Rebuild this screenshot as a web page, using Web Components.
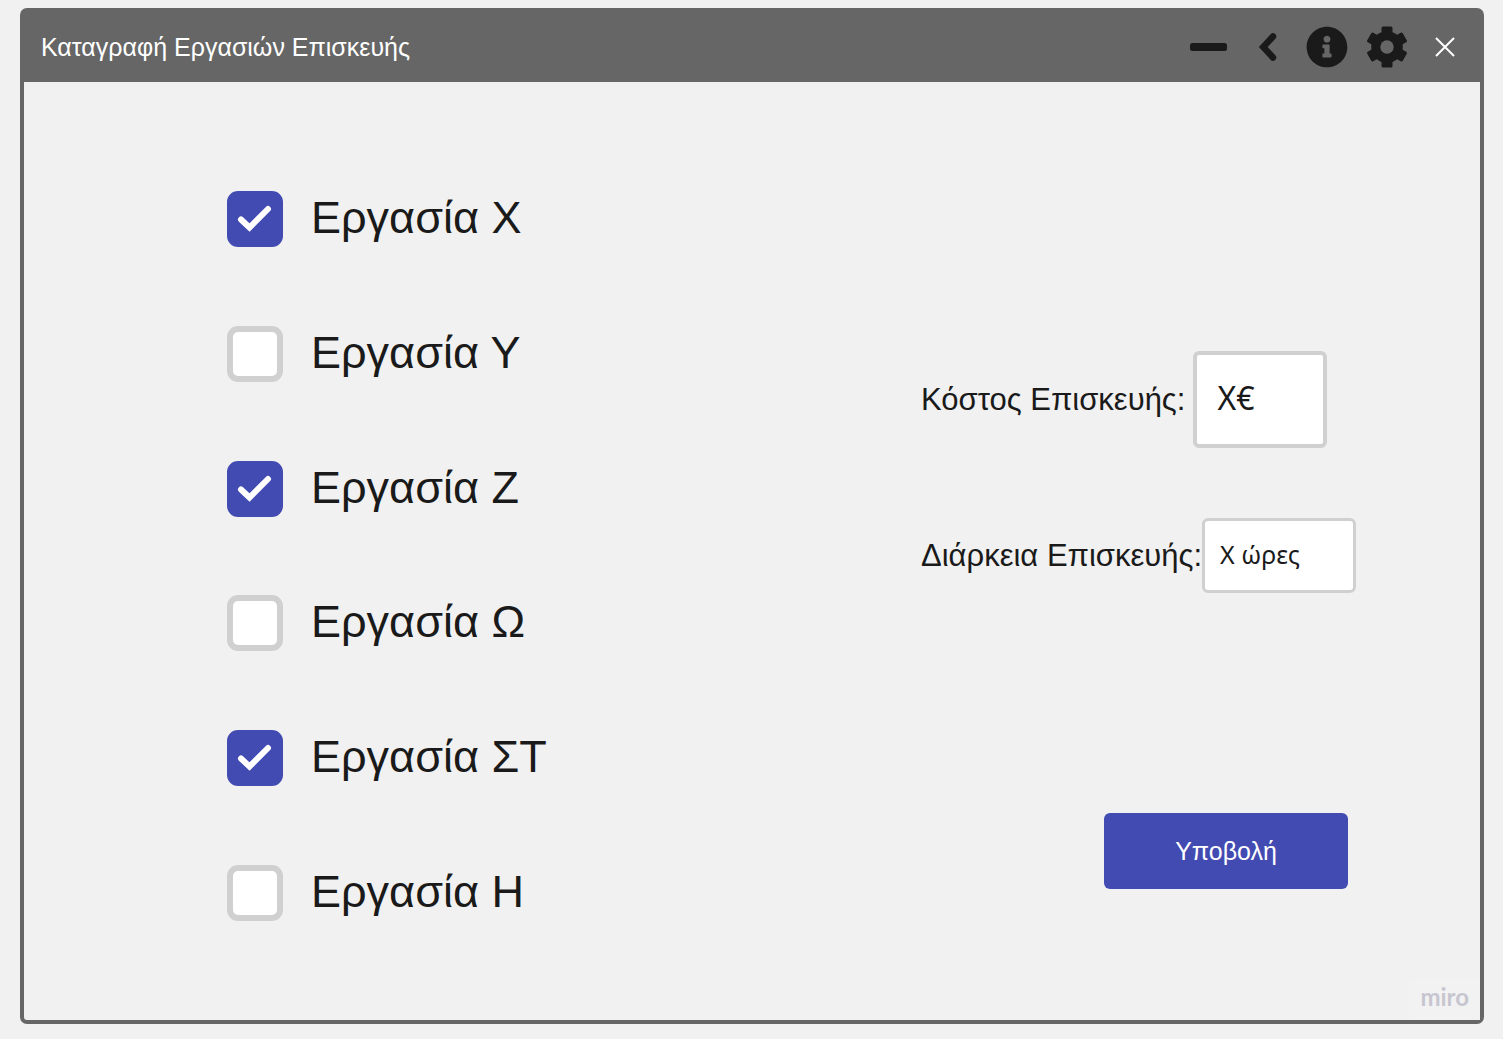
<!DOCTYPE html>
<html lang="el">
<head>
<meta charset="utf-8">
<title>Καταγραφή Εργασιών Επισκευής</title>
<style>
  * { box-sizing: border-box; }
  html { background: #f1f1f1; }
  body { margin: 0; min-height: 100vh; padding: 8px 19px 15px 20px; display: flex; font-family: "Liberation Sans", Arial, sans-serif; color: #1a1a1a; }
</style>
</head>
<body>
<app-window heading="Καταγραφή Εργασιών Επισκευής">
  <repair-form></repair-form>
</app-window>

<template id="t-window">
  <style>
    * { box-sizing: border-box; }
    :host { display: flex; flex-direction: column; flex: 1; position: relative; border: 4px solid #666; border-radius: 7px; background: #f1f1f1; }
    header { display: flex; align-items: center; justify-content: space-between; height: 70px; padding: 0 16px 0 17px; background: #666; }
    h1 { margin: 0; font-size: 25px; font-weight: 400; line-height: 32px; color: #fff; }
    nav { display: flex; align-items: center; gap: 18px; }
    button { display: flex; align-items: center; justify-content: center; width: 42px; height: 42px; padding: 0; border: 0; background: none; color: #1a1a1a; }
    button.close { width: 38px; color: #fff; }
    svg { display: block; }
    main { flex: 1; display: flex; }
    .mark { position: absolute; right: 0; bottom: 0; padding: 8px 11px 13px; background: #f2f2f2; font: 700 24px/20px Lato, sans-serif; color: #c7c6d0; }
  </style>
  <header>
    <h1></h1>
    <nav>
      <button aria-label="Ελαχιστοποίηση"><svg width="42" height="42" viewBox="0 0 42 42"><rect x="4" y="17" width="37" height="8" rx="2.5" fill="currentColor"/></svg></button>
      <button aria-label="Πίσω"><svg width="42" height="42" viewBox="0 0 42 42"><path d="M27 10.500 17.300 21l9.700 10.500" fill="none" stroke="currentColor" stroke-width="6.500" stroke-linecap="round" stroke-linejoin="miter"/></svg></button>
      <button aria-label="Πληροφορίες"><svg width="42" height="42" viewBox="0 0 512 512"><path fill="currentColor" d="M256 8C119 8 8 119 8 256s111 248 248 248 248-111 248-248S393 8 256 8zm0 110c23.200 0 42 18.800 42 42s-18.800 42-42 42-42-18.800-42-42 18.800-42 42-42zm56 254c0 6.600-5.400 12-12 12h-88c-6.600 0-12-5.400-12-12v-24c0-6.600 5.400-12 12-12h12v-64h-12c-6.600 0-12-5.400-12-12v-24c0-6.600 5.400-12 12-12h64c6.600 0 12 5.400 12 12v100h12c6.600 0 12 5.400 12 12v24z"/></svg></button>
      <button aria-label="Ρυθμίσεις"><svg width="42" height="42" viewBox="-21 -21 42 42"><defs><mask id="hole"><rect x="-21" y="-21" width="42" height="42" fill="#fff"/><circle r="6.700" fill="#000"/></mask></defs><g mask="url(#hole)" fill="currentColor"><circle r="15.800"/><rect x="-5.500" y="-20.500" width="11" height="41" rx="1.500"/><rect x="-5.500" y="-20.500" width="11" height="41" rx="1.500" transform="rotate(60)"/><rect x="-5.500" y="-20.500" width="11" height="41" rx="1.500" transform="rotate(120)"/></g></svg></button>
      <button class="close" aria-label="Κλείσιμο"><svg width="38" height="42" viewBox="0 0 38 42"><path d="M10 12l18 18M28 12L10 30" stroke="currentColor" stroke-width="2" fill="none"/></svg></button>
    </nav>
  </header>
  <main><slot></slot></main>
  <div class="mark">miro</div>
</template>

<template id="t-form">
  <style>
    * { box-sizing: border-box; }
    :host { display: flex; flex: 1; }
    form { flex: 1; display: grid; grid-template-columns: 1fr 435px; padding: 109px 124px 99px 203px; }
    .tasks { display: flex; flex-direction: column; justify-content: space-between; gap: 24px; }
    .details { display: flex; flex-direction: column; align-items: flex-start; padding: 160px 0 32px; }
    .details field-box + field-box { margin-top: 70px; }
    .submit { align-self: flex-end; width: 244px; height: 76px; margin: auto 8px 0 0; border: 0; border-radius: 6px; background: #424bb2; color: #fff; font: 25px/32px "Liberation Sans", Arial, sans-serif; }
  </style>
  <form>
    <div class="tasks">
      <task-check checked>Εργασία Χ</task-check>
      <task-check>Εργασία Υ</task-check>
      <task-check checked>Εργασία Ζ</task-check>
      <task-check>Εργασία Ω</task-check>
      <task-check checked>Εργασία ΣΤ</task-check>
      <task-check>Εργασία Η</task-check>
    </div>
    <div class="details">
      <field-box label="Κόστος Επισκευής:" value="Χ€" size="large"></field-box>
      <field-box label="Διάρκεια Επισκευής:" value="Χ ώρες"></field-box>
      <button class="submit" type="button">Υποβολή</button>
    </div>
  </form>
</template>

<template id="t-check">
  <style>
    * { box-sizing: border-box; }
    :host { display: block; }
    label { display: flex; align-items: center; gap: 28px; height: 56px; font-size: 45px; line-height: 54px; white-space: nowrap; }
    .box { display: grid; width: 56px; height: 56px; }
    .text { padding-bottom: 2px; }
    input, svg { grid-area: 1 / 1; }
    input { appearance: none; width: 56px; height: 56px; margin: 0; border: 6px solid #d0d0d0; border-radius: 11px; background: #fff; }
    input:checked { border-color: #424bb2; background: #424bb2; }
    svg { visibility: hidden; pointer-events: none; z-index: 1; }
    input:checked + svg { visibility: visible; }
  </style>
  <label><span class="box"><input type="checkbox"><svg width="56" height="56" viewBox="0 0 56 56"><path d="M14 28.500l8.500 8L41 18" fill="none" stroke="#fff" stroke-width="6" stroke-linecap="round"/></svg></span><span class="text"><slot></slot></span></label>
</template>

<template id="t-field">
  <style>
    * { box-sizing: border-box; }
    :host { display: flex; align-items: center; }
    label { font-size: 31px; line-height: 36px; white-space: nowrap; }
    input { width: 154px; height: 75px; padding: 0 15px 4px; border: 3px solid #d0d0d0; border-radius: 6px; background: #fff; color: #1a1a1a; font: 400 25px/32px "Noto Sans", sans-serif; }
    :host([size="large"]) { gap: 8px; }
    :host([size="large"]) input { width: 134px; height: 97px; padding: 0 20px 4px; border-width: 4px; font-size: 32px; line-height: 40px; }
  </style>
  <label for="value"></label><input id="value" type="text">
</template>

<script>
  class Base extends HTMLElement {
    mount(id) {
      const root = this.attachShadow({ mode: 'open' });
      root.append(document.getElementById(id).content.cloneNode(true));
      return root;
    }
  }
  customElements.define('app-window', class extends Base {
    connectedCallback() {
      if (this.shadowRoot) return;
      this.mount('t-window').querySelector('h1').textContent = this.getAttribute('heading');
    }
  });
  customElements.define('task-check', class extends Base {
    connectedCallback() {
      if (this.shadowRoot) return;
      this.mount('t-check').querySelector('input').checked = this.hasAttribute('checked');
    }
  });
  customElements.define('field-box', class extends Base {
    connectedCallback() {
      if (this.shadowRoot) return;
      const root = this.mount('t-field');
      root.querySelector('label').textContent = this.getAttribute('label');
      root.querySelector('input').value = this.getAttribute('value');
    }
  });
  customElements.define('repair-form', class extends Base {
    connectedCallback() {
      if (!this.shadowRoot) this.mount('t-form');
    }
  });
</script>
</body>
</html>
